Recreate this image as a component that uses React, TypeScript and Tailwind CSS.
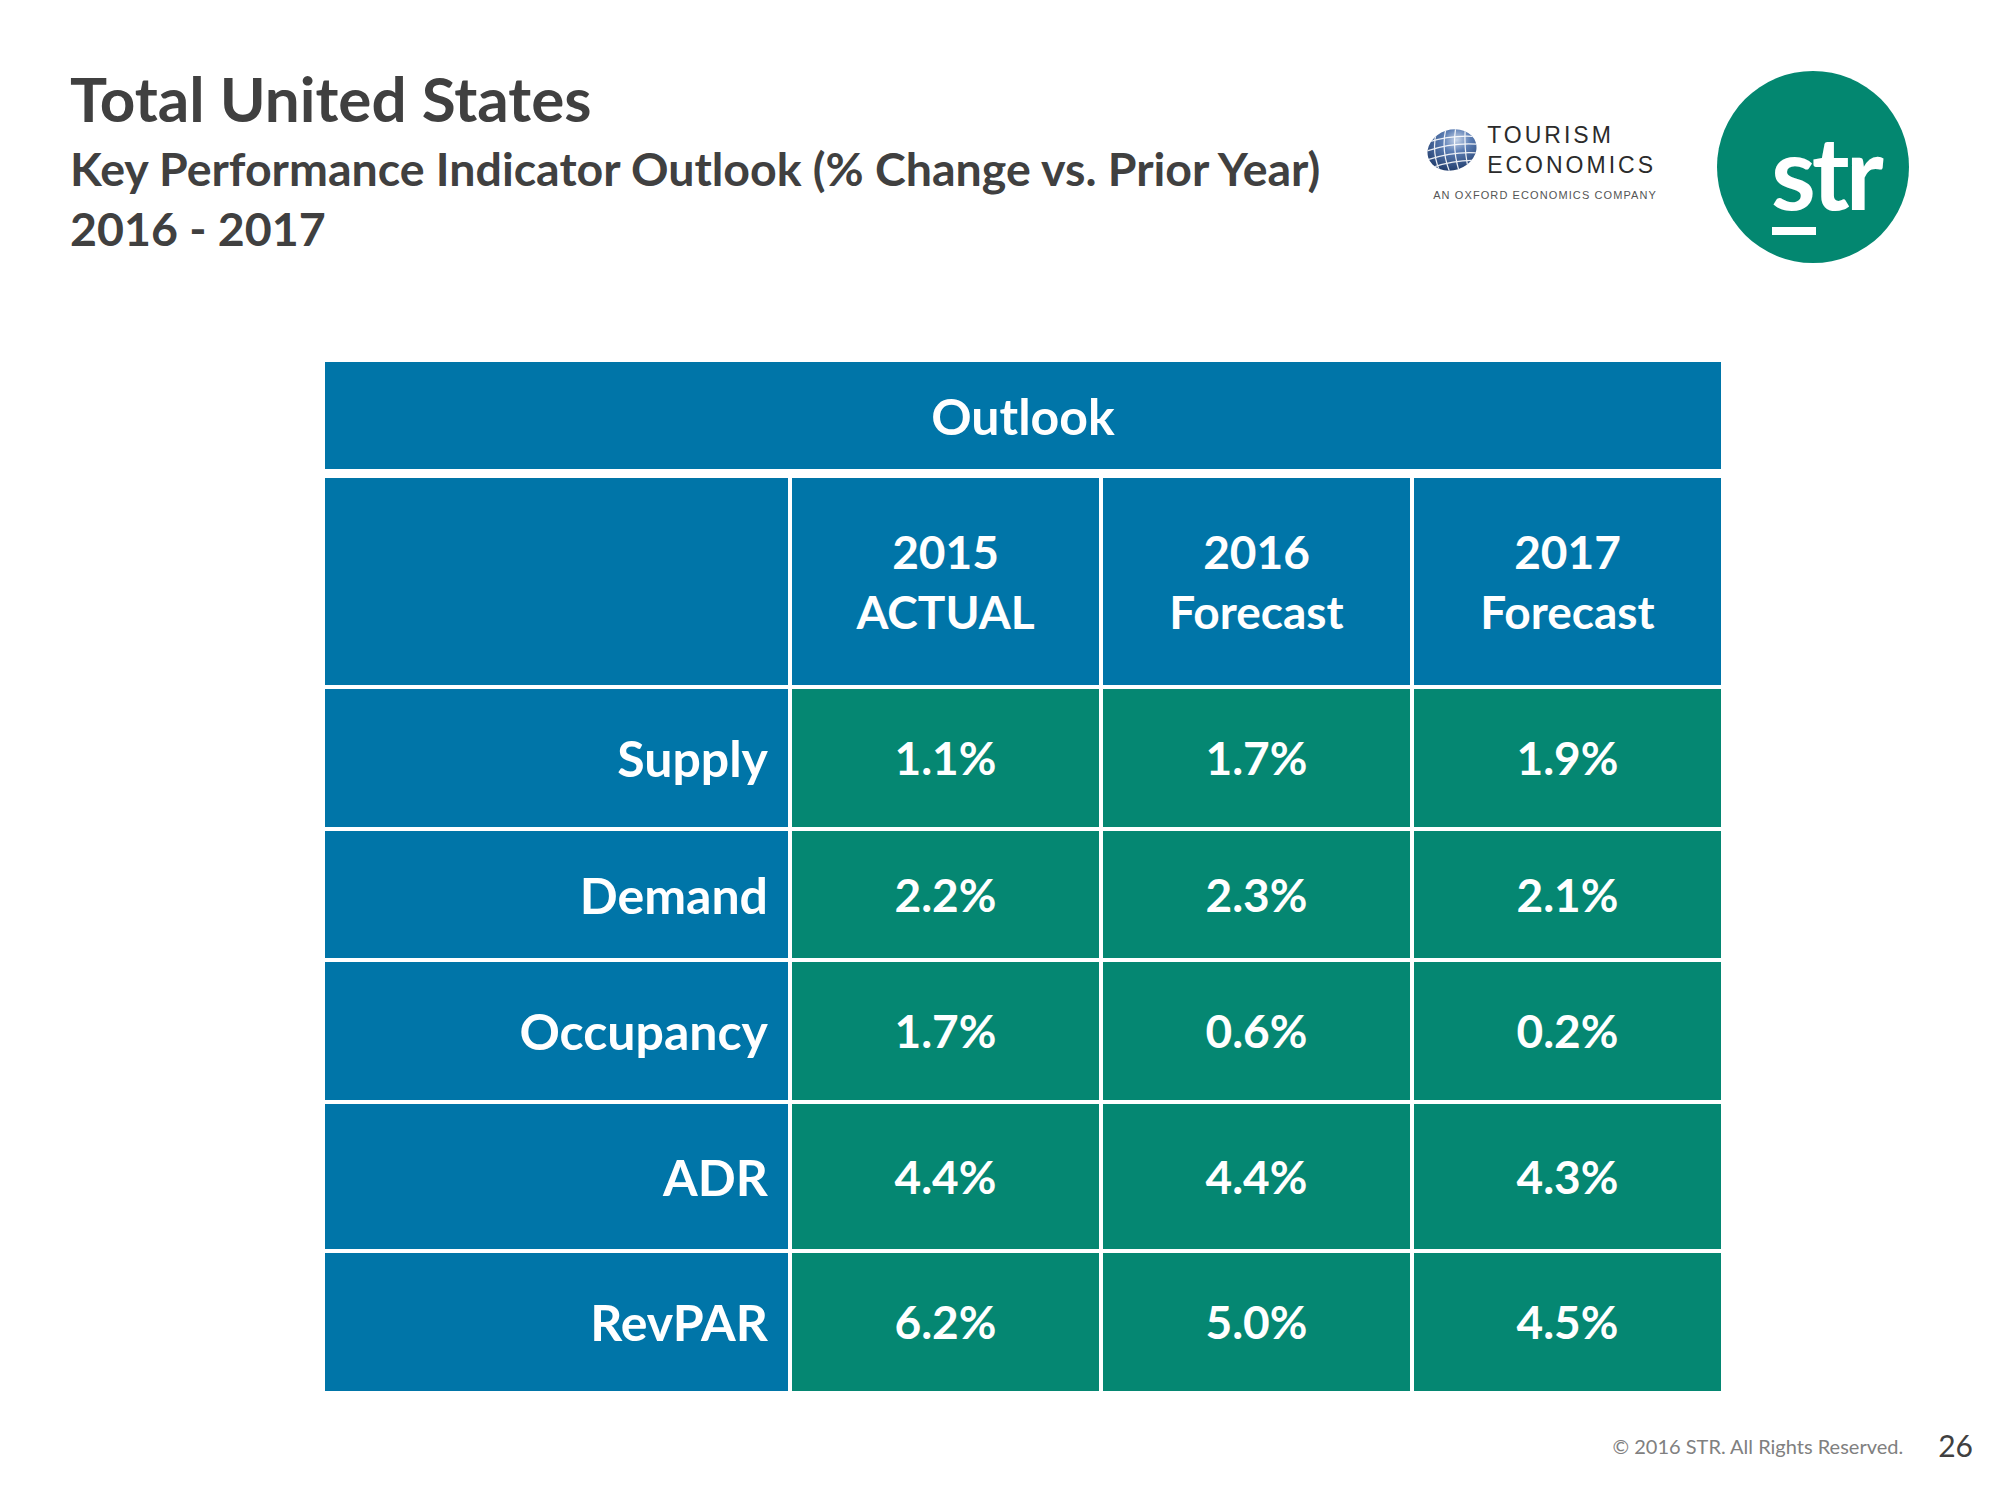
import React from 'react';

const rows = [
  { label: 'Supply', values: ['1.1%', '1.7%', '1.9%'], h: 'h-[138px]' },
  { label: 'Demand', values: ['2.2%', '2.3%', '2.1%'], h: 'h-[127px]' },
  { label: 'Occupancy', values: ['1.7%', '0.6%', '0.2%'], h: 'h-[138px]' },
  { label: 'ADR', values: ['4.4%', '4.4%', '4.3%'], h: 'h-[145px]' },
  { label: 'RevPAR', values: ['6.2%', '5.0%', '4.5%'], h: 'h-[138px]' },
];

const columns = [
  ['2015', 'ACTUAL'],
  ['2016', 'Forecast'],
  ['2017', 'Forecast'],
];

const Globe = () => (
  <svg width="54" height="46" viewBox="0 0 56 48">
    <defs>
      <radialGradient id="globeFill" cx="0.65" cy="0.3" r="0.8">
        <stop offset="0" stopColor="#c9d6ea" />
        <stop offset="0.35" stopColor="#5d7fb5" />
        <stop offset="1" stopColor="#1c3766" />
      </radialGradient>
      <clipPath id="globeClip">
        <ellipse cx="28" cy="24" rx="26" ry="21" transform="rotate(-18 28 24)" />
      </clipPath>
    </defs>
    <ellipse cx="28" cy="24" rx="26" ry="21" transform="rotate(-18 28 24)" fill="url(#globeFill)" />
    <g clipPath="url(#globeClip)" stroke="#ffffff" strokeWidth="1.3" fill="none" opacity="0.9">
      <path d="M2 16 Q28 8 54 10" />
      <path d="M2 25 Q28 16 55 18" />
      <path d="M3 34 Q30 25 55 27" />
      <path d="M8 42 Q32 34 54 35" />
      <path d="M12 4 Q6 26 16 48" />
      <path d="M22 0 Q16 24 26 48" />
      <path d="M32 0 Q28 24 36 48" />
      <path d="M42 0 Q40 24 46 48" />
    </g>
  </svg>
);

const StrLogo = () => (
  <svg width="194" height="194" viewBox="0 0 194 194">
    <circle cx="97" cy="97" r="96" fill="#038770" />
    <text
      x="55"
      y="140"
      fill="#ffffff"
      fontFamily="Lato, 'Noto Sans', sans-serif"
      fontWeight="700"
      fontSize="102"
      letterSpacing="-4"
    >
      str
    </text>
    <rect x="56" y="157" width="44" height="8" fill="#ffffff" />
  </svg>
);

export default function App() {
  return (
    <div className="w-[2000px] h-[1500px] bg-white flex flex-col font-['Lato','Noto_Sans',sans-serif] text-[#404040]">
      {/* header */}
      <div className="flex items-start">
        <div className="pl-[70px] pt-[68px]">
          <h1 className="text-[62px] leading-[60px] font-bold">Total United States</h1>
          <div className="mt-[10px] text-[46.5px] leading-[60px] font-bold">
            <p>Key Performance Indicator Outlook (% Change vs. Prior Year)</p>
            <p>2016 - 2017</p>
          </div>
        </div>
        <div className="ml-auto mr-[90px] pt-[70px] flex items-center gap-[59px]">
          <div className="flex flex-col mt-[-14px]">
            <div className="flex items-center gap-[8px]">
              <Globe />
              <div className="font-['Liberation_Sans',sans-serif] text-[23px] leading-[30px] tracking-[3px] text-[#2b2b2b]">
                <p>TOURISM</p>
                <p>ECONOMICS</p>
              </div>
            </div>
            <p className="mt-[10px] ml-[8px] font-['Liberation_Sans',sans-serif] text-[11px] leading-none tracking-[1.1px] text-[#555555]">
              AN OXFORD ECONOMICS COMPANY
            </p>
          </div>
          <StrLogo />
        </div>
      </div>

      {/* table */}
      <div className="ml-[325px] mt-[98px] w-[1396px] text-white font-bold">
        <div className="h-[107px] bg-[#0075a8] flex items-center justify-center text-[50px] leading-none">
          Outlook
        </div>
        <div className="mt-[9px] grid grid-cols-[463px_307px_307px_307px] gap-[4px]">
          <div className="h-[207px] bg-[#0075a8]" />
          {columns.map(([year, kind]) => (
            <div
              key={year + kind}
              className="h-[207px] bg-[#0075a8] flex flex-col items-center justify-center text-[46px] leading-[60px]"
            >
              <span>{year}</span>
              <span>{kind}</span>
            </div>
          ))}
          {rows.map((row) => (
            <React.Fragment key={row.label}>
              <div
                className={`${row.h} bg-[#0075a8] flex items-center justify-end pr-[20px] text-[50px] leading-none`}
              >
                {row.label}
              </div>
              {row.values.map((v, i) => (
                <div
                  key={i}
                  className={`${row.h} bg-[#058772] flex items-center justify-center text-[46px] leading-none`}
                >
                  {v}
                </div>
              ))}
            </React.Fragment>
          ))}
        </div>
      </div>

      {/* footer */}
      <div className="mt-auto pb-[40px] pr-[27px] flex justify-end items-end gap-[35px]">
        <span className="mb-[4px] text-[20px] leading-none text-[#808080]">© 2016 STR. All Rights Reserved.</span>
        <span className="text-[30px] leading-none text-[#404040]">26</span>
      </div>
    </div>
  );
}
